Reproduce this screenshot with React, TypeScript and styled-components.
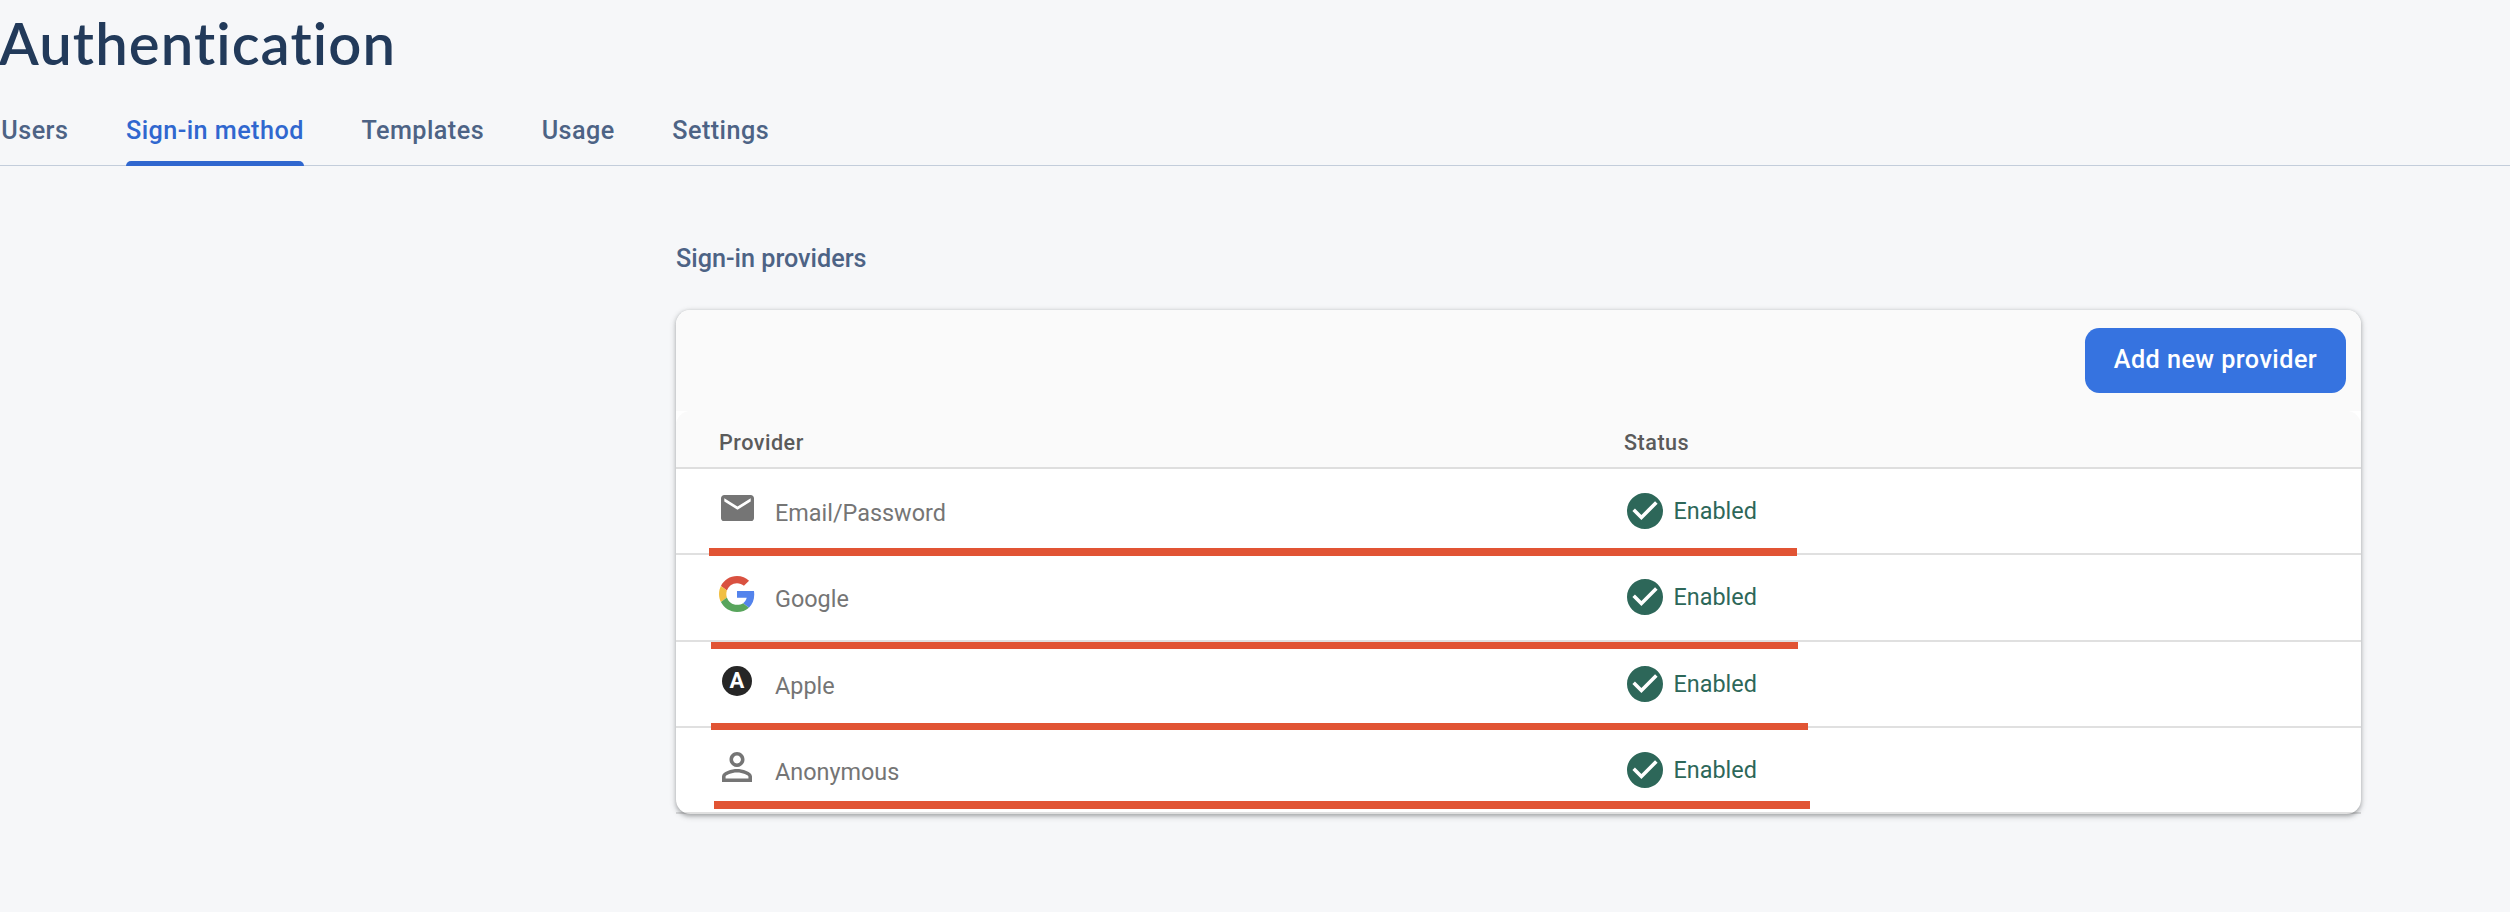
import React from "react";
import styled, { createGlobalStyle } from "styled-components";

const GlobalStyle = createGlobalStyle`
  *, *::before, *::after { box-sizing: border-box; }
  body {
    margin: 0;
    background: #f6f7f9;
    font-family: Roboto, "Liberation Sans", sans-serif;
    overflow: hidden;
  }
`;

const Page = styled.main`
  display: flex;
  flex-direction: column;
  width: 100%;
  height: 912px;
  background: #f6f7f9;
`;

const Title = styled.h1`
  margin: 0 0 9px -1px;
  height: 85px;
  line-height: 85px;
  font-family: Lato, Roboto, sans-serif;
  font-size: 58px;
  font-weight: 600;
  letter-spacing: 1.1px;
  font-variant-ligatures: none;
  color: #223a5a;
`;

const TabBar = styled.nav`
  display: flex;
  gap: 57.6px;
  height: 72px;
  padding-left: 1.3px;
  border-bottom: 1px solid #c3cddb;
`;

const Tab = styled.a<{ $active?: boolean }>`
  display: flex;
  align-items: center;
  position: relative;
  height: 72px;
  font-size: 25.2px;
  font-weight: 500;
  letter-spacing: 0.45px;
  white-space: nowrap;
  color: ${(p) => (p.$active ? "#3067cf" : "#4d6385")};

  &::after {
    content: "";
    display: ${(p) => (p.$active ? "block" : "none")};
    position: absolute;
    left: 0;
    right: 0;
    bottom: 0;
    height: 5px;
    border-radius: 5px 5px 0 0;
    background: #3067cf;
  }
`;

const Content = styled.section`
  width: 1685px;
  margin: 77.4px 0 0 676px;
`;

const SectionTitle = styled.h2`
  margin: 0 0 34.4px;
  height: 32px;
  line-height: 32px;
  font-size: 25.2px;
  font-weight: 500;
  color: #4d6385;
`;

const Card = styled.div`
  position: relative;
  border-radius: 14.4px;
  background: #fff;
  box-shadow:
    0 1.8px 3.6px rgba(60, 64, 67, 0.3),
    0 1.8px 5.4px 1.8px rgba(60, 64, 67, 0.15);
`;

const Toolbar = styled.div`
  display: flex;
  justify-content: flex-end;
  align-items: center;
  height: 101px;
  padding: 0 15px;
  border-radius: 14.4px 14.4px 0 0;
  background: #fafafa;
`;

const AddButton = styled.button`
  height: 65px;
  width: 261px;
  padding: 0 0 2px;
  border: 0;
  border-radius: 14.4px;
  background: #3673e0;
  color: #fff;
  font: 500 25.2px Roboto, sans-serif;
  letter-spacing: 0.45px;
`;

const gridColumns = "905px 1fr";

const HeaderRow = styled.div`
  display: grid;
  grid-template-columns: ${gridColumns};
  align-items: center;
  height: 58px;
  padding: 5px 43px 0;
  border-radius: 14.4px 14.4px 0 0;
  background: #fafafa;
  box-shadow: inset 0 -2px 0 #dedede;
  font-size: 21.6px;
  font-weight: 500;
  letter-spacing: 0.5px;
  color: #5b5b5b;
`;

const Row = styled.div`
  display: grid;
  grid-template-columns: ${gridColumns};
  align-items: center;
  height: 86.4px;
  padding: 0 43px;
  border-bottom: 2px solid rgba(0, 0, 0, 0.12);
  font-size: 23.4px;
`;

const ProviderCell = styled.div`
  display: flex;
  align-items: center;
  color: #757575;
`;

const IconSlot = styled.span`
  display: flex;
  align-items: center;
  justify-content: center;
  width: 36px;
  height: 36px;
  margin: 0 20px 6px 0;
`;

const ProviderName = styled.span`
  padding-top: 4px;
`;

const StatusCell = styled.div`
  display: flex;
  align-items: center;
  gap: 10.5px;
  padding-left: 3px;
  color: #2d6759;
`;

const AppleBadge = styled.span`
  width: 30px;
  height: 30px;
  border-radius: 50%;
  background: #262626;
  color: #fff;
  font-size: 22px;
  font-weight: 700;
  line-height: 30px;
  text-align: center;
`;

const Underline = styled.div<{ $x: number; $y: number; $w: number; $h: number }>`
  position: absolute;
  left: ${(p) => p.$x}px;
  top: ${(p) => p.$y}px;
  width: ${(p) => p.$w}px;
  height: ${(p) => p.$h}px;
  background: #e15434;
`;

const MailIcon = () => (
  <svg width="33" height="26.4" viewBox="2 4 20 16" fill="#757575">
    <path d="M20 4H4c-1.1 0-1.99.9-1.99 2L2 18c0 1.1.9 2 2 2h16c1.1 0 2-.9 2-2V6c0-1.1-.9-2-2-2zm0 4l-8 5-8-5V6l8 5 8-5v2z" />
  </svg>
);

const GoogleIcon = () => (
  <svg width="36" height="36" viewBox="0 0 48 48">
    <path fill="#d95140" d="M24 9.5c3.54 0 6.71 1.22 9.21 3.6l6.85-6.85C35.9 2.38 30.47 0 24 0 14.62 0 6.51 5.38 2.56 13.22l7.98 6.19C12.43 13.72 17.74 9.5 24 9.5z" />
    <path fill="#5383ec" d="M46.98 24.55c0-1.57-.15-3.09-.38-4.55H24v9.02h12.94c-.58 2.96-2.26 5.48-4.78 7.18l7.73 6c4.51-4.18 7.09-10.36 7.09-17.65z" />
    <path fill="#f1bf42" d="M10.53 28.59c-.48-1.45-.76-2.99-.76-4.59s.27-3.14.76-4.59l-7.98-6.19C.92 16.46 0 20.12 0 24c0 3.88.92 7.54 2.56 10.78l7.97-6.19z" />
    <path fill="#58a55c" d="M24 48c6.48 0 11.93-2.13 15.89-5.81l-7.73-6c-2.15 1.45-4.92 2.3-8.16 2.3-6.26 0-11.57-4.22-13.47-9.91l-7.98 6.19C6.51 42.62 14.62 48 24 48z" />
  </svg>
);

const PersonIcon = () => (
  <svg width="30" height="30" viewBox="4 4 16 16" fill="#757575">
    <path d="M12 5.9c1.16 0 2.1.94 2.1 2.1s-.94 2.1-2.1 2.1S9.9 9.16 9.9 8s.94-2.1 2.1-2.1m0 9c2.97 0 6.1 1.46 6.1 2.1v1.1H5.9V17c0-.64 3.13-2.1 6.1-2.1M12 4C9.79 4 8 5.79 8 8s1.79 4 4 4 4-1.79 4-4-1.79-4-4-4zm0 9c-2.67 0-8 1.34-8 4v3h16v-3c0-2.66-5.33-4-8-4z" />
  </svg>
);

const CheckIcon = () => (
  <svg width="36" height="36" viewBox="2 2 20 20" fill="#2d6759">
    <path d="M12 2C6.48 2 2 6.48 2 12s4.48 10 10 10 10-4.48 10-10S17.52 2 12 2zm-2 15l-5-5 1.41-1.41L10 14.17l7.59-7.59L19 8l-9 9z" />
  </svg>
);

const tabs = ["Users", "Sign-in method", "Templates", "Usage", "Settings"];

const providers = [
  { name: "Email/Password", icon: <MailIcon /> },
  { name: "Google", icon: <GoogleIcon /> },
  { name: "Apple", icon: <AppleBadge>A</AppleBadge> },
  { name: "Anonymous", icon: <PersonIcon /> },
];

const underlines = [
  { x: 33, y: 238.2, w: 1088, h: 8 },
  { x: 35, y: 332.2, w: 1087, h: 7 },
  { x: 35, y: 413.2, w: 1097, h: 7 },
  { x: 38, y: 491.2, w: 1096, h: 8 },
];

export default function App() {
  return (
    <Page>
      <GlobalStyle />
      <Title>Authentication</Title>
      <TabBar>
        {tabs.map((t) => (
          <Tab key={t} $active={t === "Sign-in method"}>{t}</Tab>
        ))}
      </TabBar>
      <Content>
        <SectionTitle>Sign-in providers</SectionTitle>
        <Card>
          <Toolbar>
            <AddButton>Add new provider</AddButton>
          </Toolbar>
          <HeaderRow>
            <span>Provider</span>
            <span>Status</span>
          </HeaderRow>
          {providers.map((p) => (
            <Row key={p.name}>
              <ProviderCell>
                <IconSlot>{p.icon}</IconSlot>
                <ProviderName>{p.name}</ProviderName>
              </ProviderCell>
              <StatusCell>
                <CheckIcon />
                Enabled
              </StatusCell>
            </Row>
          ))}
          {underlines.map((u) => (
            <Underline key={u.y} $x={u.x} $y={u.y} $w={u.w} $h={u.h} />
          ))}
        </Card>
      </Content>
    </Page>
  );
}
